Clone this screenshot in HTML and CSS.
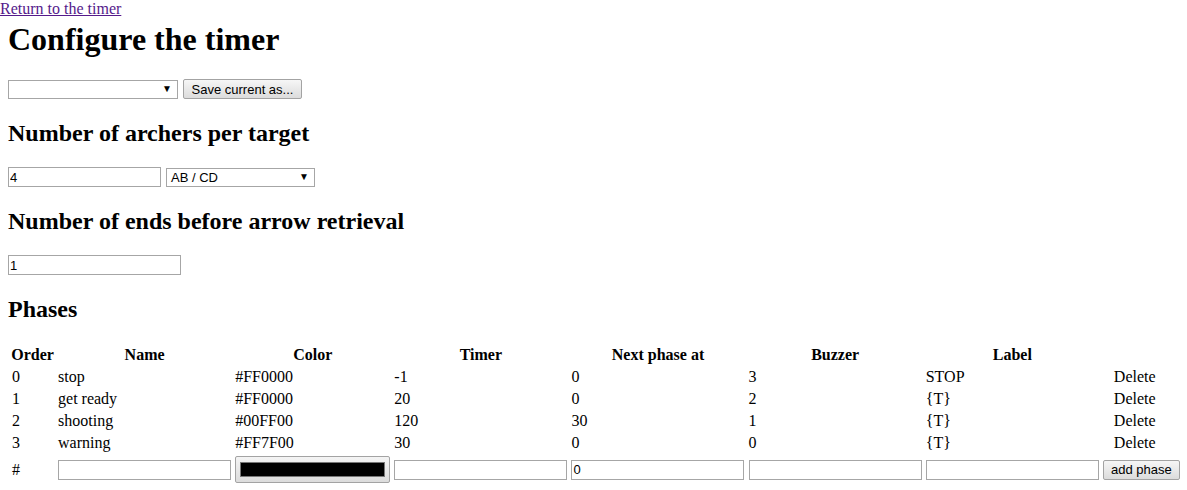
FILE: index.html
```html
<!DOCTYPE html>
<html>
<head>
<meta charset="utf-8">
<title>Configure the timer</title>
<link rel="stylesheet" href="styles.css">
</head>
<body>
<a class="back" href="#">Return to the timer</a>
<main class="page">
  <h1>Configure the timer</h1>
  <div class="row">
    <div class="select select-preset"><span class="select-text"></span><span class="arrow">&#9660;</span></div>
    <button class="btn btn-save" type="button">Save current as...</button>
  </div>

  <h2>Number of archers per target</h2>
  <div class="row">
    <input class="text text-archers" type="text" value="4">
    <div class="select select-order"><span class="select-text">AB / CD</span><span class="arrow">&#9660;</span></div>
  </div>

  <h2>Number of ends before arrow retrieval</h2>
  <div class="row">
    <input class="text text-ends" type="text" value="1">
  </div>

  <h2>Phases</h2>
  <table class="phases">
    <thead>
      <tr>
        <th class="c-order">Order</th>
        <th class="c-wide">Name</th>
        <th class="c-color">Color</th>
        <th class="c-wide">Timer</th>
        <th class="c-wide">Next phase at</th>
        <th class="c-wide">Buzzer</th>
        <th class="c-wide">Label</th>
        <th class="c-last"></th>
      </tr>
    </thead>
    <tbody>
      <tr><td>0</td><td>stop</td><td>#FF0000</td><td>-1</td><td>0</td><td>3</td><td>STOP</td><td class="del">Delete</td></tr>
      <tr><td>1</td><td>get ready</td><td>#FF0000</td><td>20</td><td>0</td><td>2</td><td>{T}</td><td class="del">Delete</td></tr>
      <tr><td>2</td><td>shooting</td><td>#00FF00</td><td>120</td><td>30</td><td>1</td><td>{T}</td><td class="del">Delete</td></tr>
      <tr><td>3</td><td>warning</td><td>#FF7F00</td><td>30</td><td>0</td><td>0</td><td>{T}</td><td class="del">Delete</td></tr>
      <tr class="new-row">
        <td>#</td>
        <td><input class="text text-cell" type="text"></td>
        <td><div class="color-btn"><span class="swatch"></span></div></td>
        <td><input class="text text-cell" type="text"></td>
        <td><input class="text text-cell" type="text" value="0"></td>
        <td><input class="text text-cell" type="text"></td>
        <td><input class="text text-cell" type="text"></td>
        <td><button class="btn btn-add" type="button">add phase</button></td>
      </tr>
    </tbody>
  </table>
</main>
</body>
</html>
```

FILE: styles.css
```css
html, body {
  margin: 0;
  padding: 0;
  background: #ffffff;
  color: #000000;
  font-family: "Liberation Serif", "Times New Roman", serif;
  font-size: 16px;
}

.back {
  display: block;
  width: max-content;
  color: #551a8b;
  text-decoration: underline;
  line-height: 18px;
}

.page {
  padding: 0 8px;
}

h1 {
  font-size: 32px;
  font-weight: bold;
  margin: 3px 0 21px;
  line-height: 37px;
}

h2 {
  font-size: 24px;
  font-weight: bold;
  margin: 20px 0;
  line-height: 28px;
}

.row {
  display: flex;
  align-items: center;
  gap: 5px;
  height: 20px;
}

.text {
  box-sizing: border-box;
  height: 20px;
  margin: 0;
  padding: 1px 1px;
  border: 1px solid #a6a6a6;
  background: #ffffff;
  font-family: "Liberation Sans", Arial, sans-serif;
  font-size: 13px;
  color: #000;
  outline: none;
}

.text-archers { width: 153px; }
.text-ends { width: 173px; }
.text-cell { width: 173px; display: block; }

.select {
  box-sizing: border-box;
  height: 19px;
  border: 1px solid #a6a6a6;
  background: #ffffff;
  display: flex;
  align-items: center;
  justify-content: space-between;
  padding: 0 5px 0 4px;
  font-family: "Liberation Sans", Arial, sans-serif;
  font-size: 13px;
}

.select-preset { width: 170px; }
.select-order { width: 149px; }

.arrow {
  font-size: 10px;
  line-height: 1;
  color: #000;
}

.btn {
  box-sizing: border-box;
  height: 20px;
  margin: 0;
  padding: 0 6px;
  border: 1px solid #a3a3a3;
  border-radius: 2px;
  background: linear-gradient(#f6f6f6, #dcdcdc);
  font-family: "Liberation Sans", Arial, sans-serif;
  font-size: 13px;
  color: #000;
}

.btn-save { width: 119px; }
.btn-add { width: 77px; display: block; }

.phases {
  border-collapse: separate;
  border-spacing: 2px;
  margin: 0;
  table-layout: fixed;
  width: 1175px;
}

.phases th,
.phases td {
  box-sizing: border-box;
  padding: 1px;
  line-height: 18px;
  text-align: left;
  vertical-align: middle;
}

.phases th {
  text-align: center;
  font-weight: bold;
}

.phases td:first-child { padding-left: 2px; }

.c-order { width: 45px; }
.c-wide { width: 175px; }
.c-color { width: 157px; }
.c-last { width: 79px; }

.del { padding-left: 12px !important; }

.new-row td { height: 29px; }

.color-btn {
  box-sizing: border-box;
  width: 155px;
  height: 27px;
  border: 1px solid #a3a3a3;
  border-radius: 2px;
  background: linear-gradient(#f4f4f4, #dcdcdc);
  padding: 5px 4px;
}

.swatch {
  display: block;
  height: 15px;
  background: #000000;
  border: 1px solid #777777;
  box-sizing: border-box;
}
```
